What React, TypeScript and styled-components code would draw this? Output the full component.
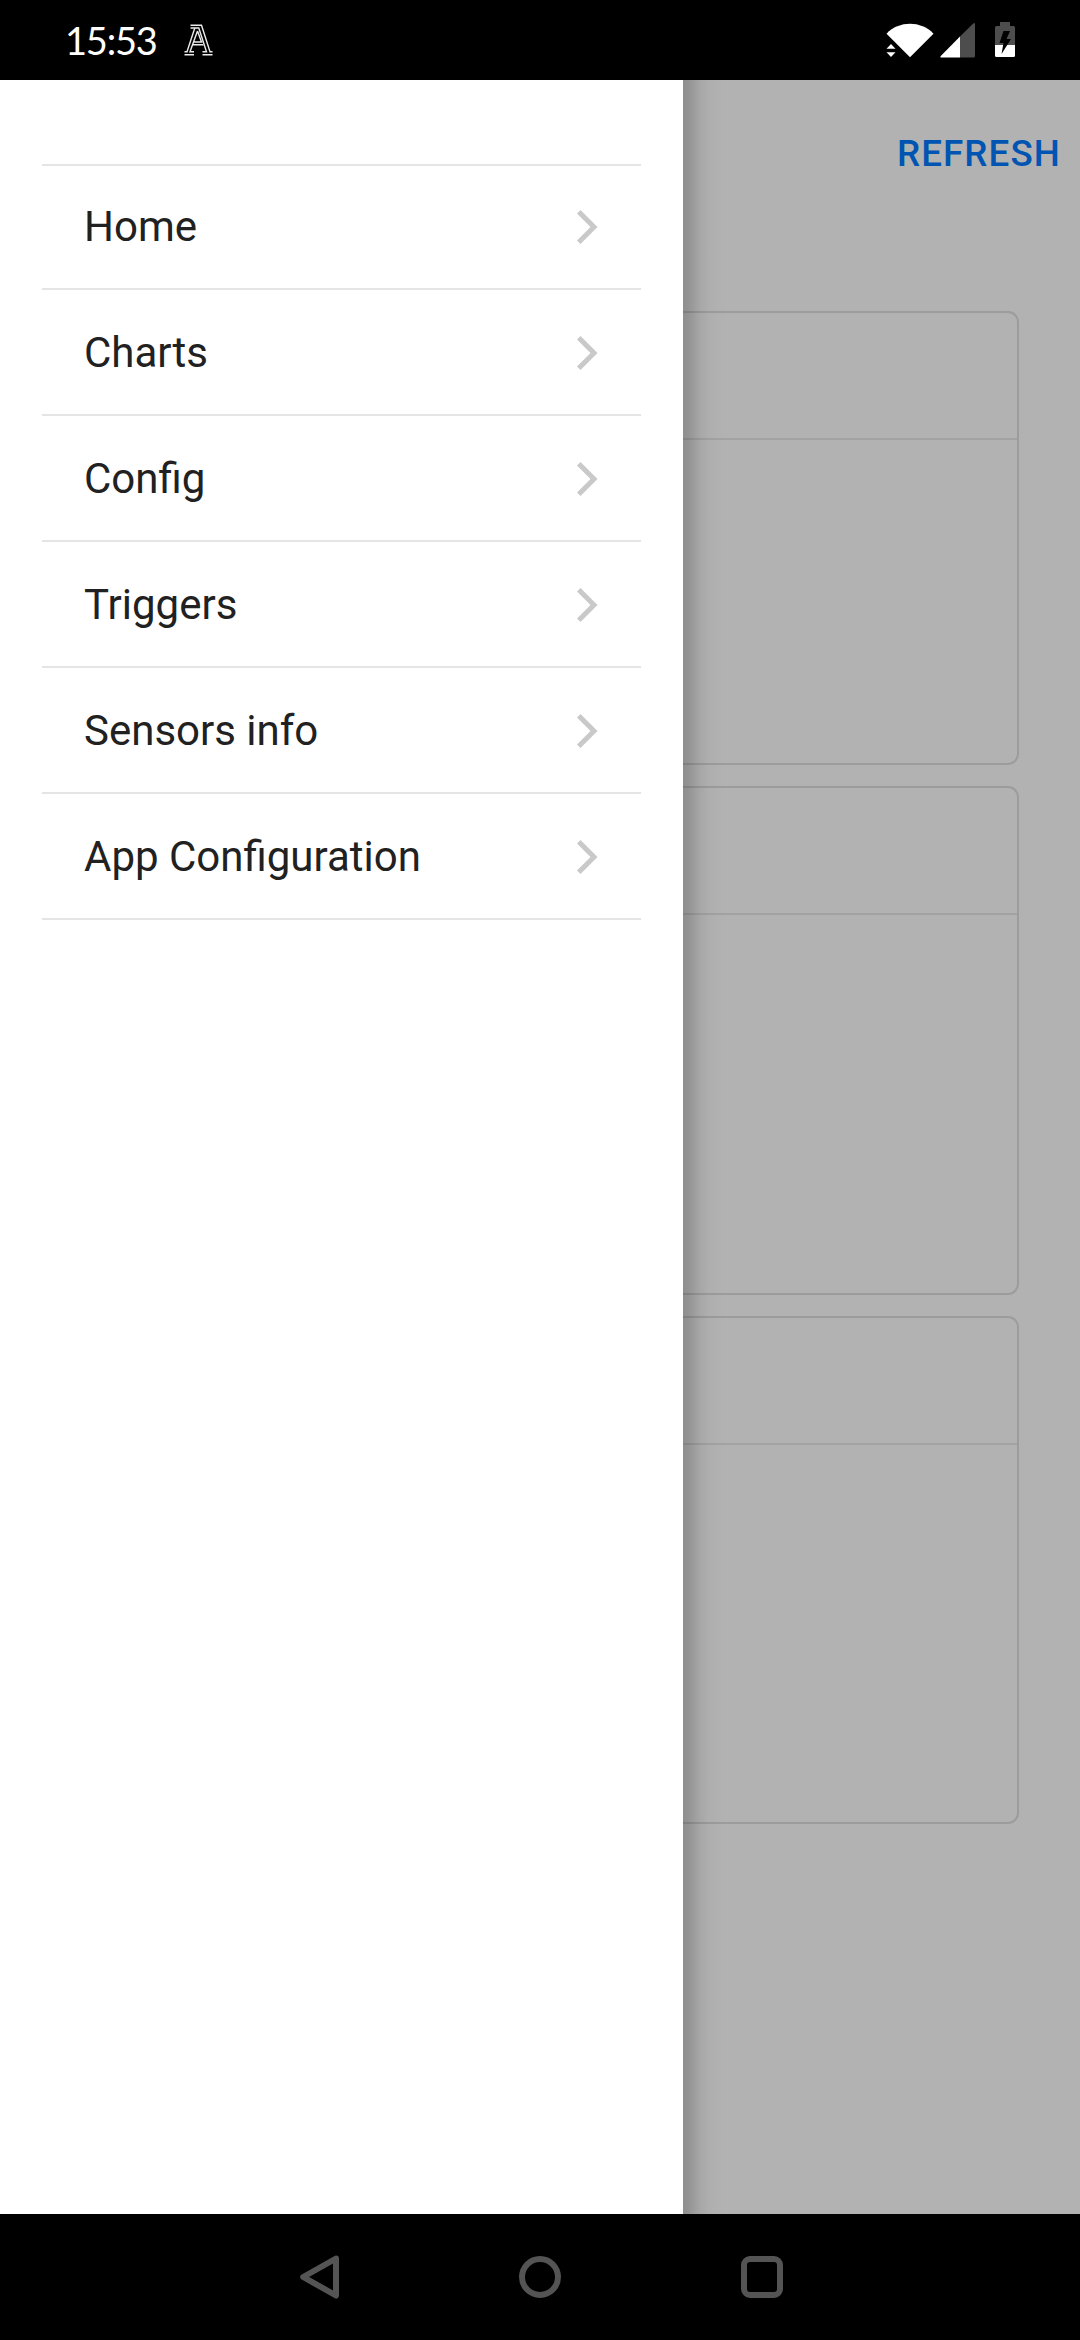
import React from "react";
import styled, { createGlobalStyle } from "styled-components";

const GlobalStyle = createGlobalStyle`
  *, *::before, *::after { box-sizing: border-box; }
  body { margin: 0; background: #000; font-family: Roboto, "Noto Sans", sans-serif; }
`;

const Screen = styled.div`
  display: flex;
  flex-direction: column;
  width: 1080px;
  height: 2340px;
  overflow: hidden;
`;

const StatusBar = styled.header`
  display: flex;
  align-items: center;
  justify-content: space-between;
  flex: 0 0 80px;
  padding: 0 65px 0 65px;
  background: #000;
`;

const StatusGroup = styled.div`
  display: flex;
  align-items: center;
`;

const Clock = styled.span`
  width: 119px;
  font: 400 38px/80px Lato, sans-serif;
  letter-spacing: -1.2px;
  color: #fff;
`;

const Glyph = styled.svg`
  display: block;
  flex: none;
`;

const Stage = styled.main`
  position: relative;
  flex: 1;
  display: flex;
  background: #b2b2b2;
`;

const Page = styled.section`
  flex: 1;
  display: flex;
  flex-direction: column;
`;

const Toolbar = styled.div`
  display: flex;
  justify-content: flex-end;
  align-items: center;
  height: 147px;
  padding-right: 19px;
`;

const RefreshButton = styled.button`
  border: 0;
  padding: 0;
  background: none;
  font: 500 36.75px/48px Roboto, sans-serif;
  letter-spacing: 1.1px;
  color: #0055b2;
`;

const CardList = styled.div`
  display: flex;
  flex-direction: column;
  gap: 21px;
  padding: 84px 61px 0;
`;

const Card = styled.article<{ $height: number }>`
  height: ${(p) => p.$height}px;
  border: 2px solid #9c9c9c;
  border-radius: 11px;
`;

const CardHeader = styled.div`
  height: 127px;
  border-bottom: 2px solid #a2a2a2;
`;

const Drawer = styled.aside`
  position: absolute;
  inset: 0 auto 0 0;
  width: 683px;
  padding: 84px 42px 0;
  background: #fff;

  &::after {
    content: "";
    position: absolute;
    top: 0;
    bottom: 0;
    left: 100%;
    width: 42px;
    background: linear-gradient(
      to right,
      rgba(0, 0, 0, 0.2) 0%,
      rgba(0, 0, 0, 0.175) 12%,
      rgba(0, 0, 0, 0.065) 40%,
      rgba(0, 0, 0, 0.02) 62%,
      rgba(0, 0, 0, 0) 100%
    );
  }
`;

const Menu = styled.nav`
  display: flex;
  flex-direction: column;
`;

const MenuItem = styled.a`
  display: flex;
  align-items: center;
  justify-content: space-between;
  height: 126px;
  padding: 0 43px 0 42px;
  border-top: 2px solid transparent;
  border-bottom: 2px solid #e5e5e5;
  font-size: 42px;
  line-height: 60px;
  color: #212121;

  &:first-child {
    border-top-color: #e5e5e5;
  }
`;

const NavBar = styled.footer`
  display: flex;
  align-items: center;
  justify-content: center;
  gap: 177px;
  flex: 0 0 126px;
  background: #000;
`;

const menuItems = ["Home", "Charts", "Config", "Triggers", "Sensors info", "App Configuration"];
const cardHeights = [454, 509, 508];

const AppLogo = () => (
  <Glyph width="30" height="34" viewBox="0 0 30 34" fill="none" stroke="#ececec" strokeWidth="1.4">
    <path d="M6.500 2.200H17.500L26 28.700H28.500M6.500 5H14.800L22.500 28.700H18.500" />
    <path d="M10.800 5L3 28.700H.5M13.500 8L6 28.700H10M13.500 8L17.500 19M9.500 19H18.500M9 21.700H19.500" />
    <path d="M.5 31.700H10M18.500 31.700H28.500" />
  </Glyph>
);

const Wifi = () => (
  <Glyph width="54" height="36" viewBox="0 0 54 36">
    <path d="M5.500 11.700C18 -1.500 40 -1.500 52.500 11.700L29 35.300Z" fill="#fff" />
    <path d="M5.500 26.800L10 22L14.500 26.800ZM5.500 30.200H14.500L10 35Z" fill="#fff" />
  </Glyph>
);

const Signal = () => (
  <Glyph width="36" height="36" viewBox="0 0 36 36">
    <path d="M33 1.700Q35 0 35 2.500V34Q35 35.500 33.500 35.500H20V14.500Z" fill="#4d4d4d" />
    <path d="M20 14.500V35.500H1.500Q-.5 35.500 1 33.700Z" fill="#fff" />
  </Glyph>
);

const Battery = () => (
  <Glyph width="20" height="36" viewBox="0 0 20 36">
    <path d="M5 0H15V4H18.500Q20 4 20 5.500V23H0V5.500Q0 4 1.500 4H5Z" fill="#4d4d4d" />
    <path d="M0 23H20V33.500Q20 35 18.500 35H1.500Q0 35 0 33.500Z" fill="#fff" />
    <path d="M8.500 9H15L11.500 17H16L6.500 32L8.500 21H4.500Z" fill="#000" />
  </Glyph>
);

const Chevron = () => (
  <Glyph width="21" height="34" viewBox="0 0 21 34">
    <path d="M3.500 0L20.500 17L3.500 34L0 30.500L13.500 17L0 3.500Z" fill="#c9c9c9" />
  </Glyph>
);

const Back = () => (
  <Glyph width="44" height="44" viewBox="0 0 44 44" fill="none" stroke="#545454" strokeWidth="6" strokeLinejoin="round">
    <path d="M39 3.500L6.200 22L39 40.500Z" />
  </Glyph>
);

const HomeCircle = () => (
  <Glyph width="44" height="44" viewBox="0 0 44 44" fill="none" stroke="#545454" strokeWidth="6">
    <circle cx="22" cy="22" r="18" />
  </Glyph>
);

const Overview = () => (
  <Glyph width="44" height="44" viewBox="0 0 44 44" fill="none" stroke="#545454" strokeWidth="6">
    <rect x="5" y="4" width="36" height="36" rx="6" />
  </Glyph>
);

const StatusIcons = styled(StatusGroup)`
  display: grid;
  grid-template-columns: 59px 55px 20px;
`;

export default function App() {
  return (
    <Screen>
      <GlobalStyle />
      <StatusBar>
        <StatusGroup>
          <Clock>15:53</Clock>
          <AppLogo />
        </StatusGroup>
        <StatusIcons>
          <Wifi />
          <Signal />
          <Battery />
        </StatusIcons>
      </StatusBar>
      <Stage>
        <Page>
          <Toolbar>
            <RefreshButton>REFRESH</RefreshButton>
          </Toolbar>
          <CardList>
            {cardHeights.map((height, index) => (
              <Card key={index} $height={height}>
                <CardHeader />
              </Card>
            ))}
          </CardList>
        </Page>
        <Drawer>
          <Menu>
            {menuItems.map((label) => (
              <MenuItem key={label}>
                <span>{label}</span>
                <Chevron />
              </MenuItem>
            ))}
          </Menu>
        </Drawer>
      </Stage>
      <NavBar>
        <Back />
        <HomeCircle />
        <Overview />
      </NavBar>
    </Screen>
  );
}
